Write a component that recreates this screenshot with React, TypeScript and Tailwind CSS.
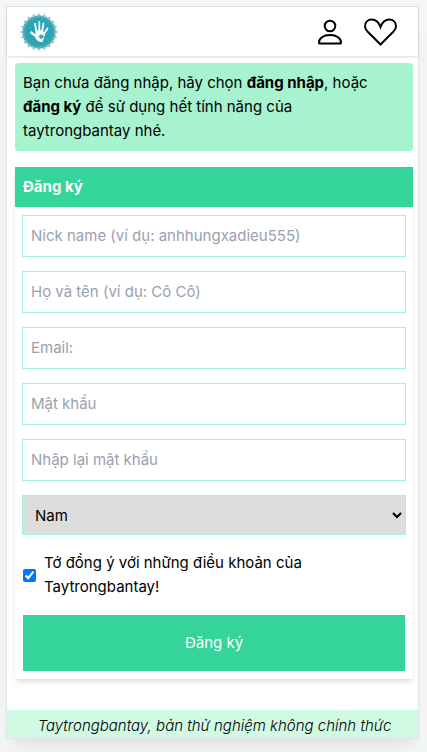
import React from "react";

function starPoints(outer: number, inner: number) {
  return Array.from({ length: 40 }, (_, i) => {
    const radius = i % 2 === 0 ? outer : inner;
    const angle = (i * Math.PI) / 20;
    return `${20 + radius * Math.sin(angle)},${20 - radius * Math.cos(angle)}`;
  }).join(" ");
}

const outerStar = starPoints(19.2, 15);
const innerStar = starPoints(17, 15.5);

function Logo() {
  return (
    <svg viewBox="0 0 40 40" className="size-10" aria-hidden="true">
      <polygon points={outerStar} fill="#86bfc9" />
      <polygon points={innerStar} fill="#5aaebb" transform="rotate(9 20 20)" />
      <circle cx="20" cy="20" r="14.4" fill="#2aa5b3" />
      <g fill="none" stroke="#fff" strokeLinecap="round">
        <path d="M17.500 20 16 12M20.300 19V10M23 20l1.500-8.500M25 22l3.500-5.500" strokeWidth="1.800" />
        <path d="m12.200 20.500 5.300 4" strokeWidth="2.200" />
      </g>
      <path d="M16.500 19.500c2-1.800 7-2 8.500.5l1 3-1.500 4.500c-2 3-6 1.500-8-1z" fill="#fff" />
      <path d="m19.500 23 1.700 1.100-.3-2.300 1.100 1.800.7-2.100.4 2.100 1.400-1.600-.4 2.400 1.800-.5-2 2c-1 1.200-3.400 1-3.600-.5z" fill="#2aa5b3" />
      <path d="M17.500 27c2 1.500 4.200 1.600 6 .5l.5 1.900c-2.200 1.200-5.300.4-6.500-2.400z" fill="#fff" />
    </svg>
  );
}

function UserIcon() {
  return (
    <svg viewBox="0 0 32 32" className="size-8" fill="none" stroke="#000" strokeWidth="2" aria-hidden="true">
      <circle cx="16" cy="10" r="5.300" />
      <path d="M5 27c-.4-4.800 4.400-8 11-8s11.400 3.200 11 8q0 .5-.6.500H5.600Q5 27.500 5 27z" />
    </svg>
  );
}

function HeartIcon() {
  return (
    <svg viewBox="0 0 36 32" className="h-8 w-9" fill="none" stroke="#000" strokeWidth="2" aria-hidden="true">
      <path d="M18.500 28.500 5.500 15.500C3.700 13.600 3 12 3 10.200 3 6.200 5.800 3.500 9.700 3.500c4.200 0 7.100 2.800 8.800 7.500 1.700-4.700 4.600-7.500 8.800-7.500 3.900 0 6.700 2.700 6.700 6.700 0 1.800-.7 3.400-2.500 5.300z" />
    </svg>
  );
}

const fields = [
  { id: "nick", type: "text", label: "Nick name (ví dụ: anhhungxadieu555)" },
  { id: "fullname", type: "text", label: "Họ và tên (ví dụ: Cô Cô)" },
  { id: "email", type: "email", label: "Email:" },
  { id: "password", type: "password", label: "Mật khẩu" },
  { id: "confirm", type: "password", label: "Nhập lại mật khẩu" },
];

export default function App() {
  return (
    <div className="min-h-screen bg-[#f5f6f6] pt-[6px] pr-2 pb-[14px] pl-[6px] font-['Inter','Liberation_Sans',sans-serif] text-[15px] leading-6 text-black">
      <div className="border border-[#e2e5e5] bg-white shadow-xl shadow-black/5">
        <header className="flex h-[49px] items-center justify-between pr-5 pl-3 shadow">
          <a href="#home" aria-label="Taytrongbantay">
            <Logo />
          </a>
          <nav className="flex items-center gap-4">
            <a href="#profile" aria-label="Tài khoản">
              <UserIcon />
            </a>
            <a href="#favorites" aria-label="Yêu thích">
              <HeartIcon />
            </a>
          </nav>
        </header>

        <main className="pt-[7px] pr-[5px] pl-2">
          <p className="rounded bg-[#a7f3d0] py-2 pr-9 pl-2">
            Bạn chưa đăng nhập, hãy chọn{" "}
            <a href="#login" className="font-bold">đăng nhập</a>, hoặc{" "}
            <a href="#register" className="font-bold">đăng ký</a> để sử dụng hết tính năng của taytrongbantay nhé.
          </p>

          <section className="mt-4 shadow-md">
            <h1 className="bg-[#35d49a] p-2 font-bold text-white">Đăng ký</h1>
            <form className="px-[7px] py-2" onSubmit={(e) => e.preventDefault()}>
              <div className="flex flex-col gap-[14px]">
                {fields.map((field) => (
                  <input
                    key={field.id}
                    id={field.id}
                    type={field.type}
                    aria-label={field.label}
                    placeholder={field.label}
                    className="block w-full border border-[#a7f3d0] bg-white p-2 leading-6 placeholder:text-gray-400"
                  />
                ))}
                <select
                  aria-label="Giới tính"
                  className="block h-10 w-full border border-[#a7f3d0] bg-[#dddddd] px-2"
                >
                  <option>Nam</option>
                  <option>Nữ</option>
                </select>
              </div>
              <div className="px-px">
                <div className="mt-4 flex items-center gap-2">
                  <input id="terms" type="checkbox" defaultChecked className="size-[13px] shrink-0" />
                  <label htmlFor="terms" className="max-w-72">
                    Tớ đồng ý với những điều khoản của Taytrongbantay!
                  </label>
                </div>
                <button type="submit" className="mt-4 block h-14 w-full bg-[#35d49a] text-white">
                  Đăng ký
                </button>
              </div>
            </form>
          </section>
        </main>

        <footer className="mt-[31px] h-7 bg-[#d1fae5] pt-1 pl-1 text-center font-light italic">
          Taytrongbantay, bản thử nghiệm không chính thức
        </footer>
      </div>
    </div>
  );
}
